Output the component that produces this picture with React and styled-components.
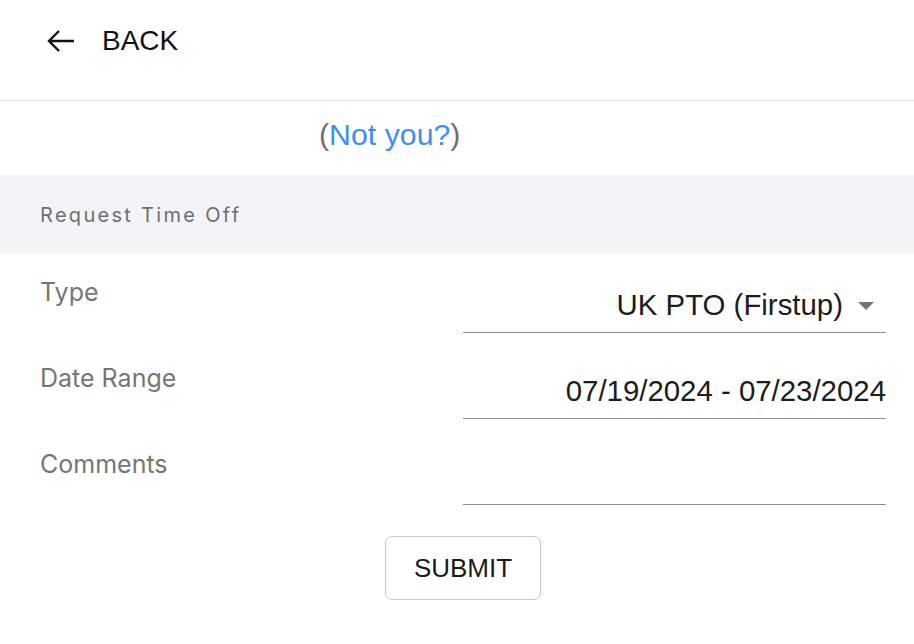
import React from "react";
import styled, { createGlobalStyle } from "styled-components";

const GlobalStyle = createGlobalStyle`
    body {
        margin: 0;
        background: #ffffff;
        font-family: "Liberation Sans", Arial, sans-serif;
    }
`;

const Page = styled.div`
    width: 914px;
    min-height: 644px;
    background: #ffffff;
`;

const Header = styled.div`
    height: 101px;
    box-sizing: border-box;
    border-bottom: 1px solid #e3e3e8;
    display: flex;
    align-items: flex-start;
    padding: 25px 0 0 47px;
`;

const BackButton = styled.button`
    display: flex;
    align-items: center;
    gap: 27px;
    padding: 0;
    border: none;
    background: transparent;
    cursor: pointer;
    font-family: "Liberation Sans", Arial, sans-serif;
    font-size: 28px;
    color: #111111;
`;

const NotYouRow = styled.div`
    height: 74px;
    box-sizing: border-box;
    display: flex;
    align-items: center;
    padding: 0 0 6px 319px;
    font-family: "Liberation Sans", Arial, sans-serif;
    font-size: 30.3px;
    color: #6f6f6f;
`;

const Link = styled.a`
    color: #3d8ff2;
    text-decoration: none;
    cursor: pointer;
`;

const SectionBand = styled.div`
    height: 79px;
    background: #f4f4f8;
    display: flex;
    align-items: center;
    padding-left: 40px;
    font-family: Inter, "Noto Sans", sans-serif;
    font-size: 20px;
    letter-spacing: 2.3px;
    color: #6e6e6e;
`;

const Row = styled.div`
    height: 86px;
    display: flex;
    justify-content: space-between;
    align-items: flex-start;
    padding: 0 28px 0 40px;
`;

const Label = styled.div`
    margin-top: 23px;
    font-family: Inter, "Noto Sans", sans-serif;
    font-size: 25px;
    color: #767676;
`;

const Field = styled.div`
    margin-top: 34px;
    width: 423px;
    height: 45px;
    box-sizing: border-box;
    border-bottom: 1px solid #8e8e8e;
    display: flex;
    justify-content: flex-end;
    align-items: flex-start;
    gap: 15px;
    font-family: "Liberation Sans", Arial, sans-serif;
    font-size: 29.4px;
    color: #1c1c1c;
`;

const DropArrow = styled.span`
    width: 0;
    height: 0;
    margin: 14px 12px 0 0;
    border-left: 8px solid transparent;
    border-right: 8px solid transparent;
    border-top: 8px solid #757575;
`;

const Actions = styled.div`
    display: flex;
    justify-content: center;
    padding: 24px 0 0 12px;
`;

const SubmitButton = styled.button`
    width: 156px;
    height: 64px;
    background: #ffffff;
    border: 1px solid #c9c9c9;
    border-radius: 7px;
    font-family: "Liberation Sans", Arial, sans-serif;
    font-size: 26px;
    color: #1a1a1a;
    cursor: pointer;
`;

function ArrowBack()
{
    return (
        <svg width="28" height="22" viewBox="0 0 28 22" fill="none">
            <path d="M12 1 L2 11 L12 21 M2 11 H27" stroke="#111" strokeWidth="2.4" strokeLinejoin="miter" />
        </svg>
    );
}

const fields = [
    { id: "type", label: "Type", value: "UK PTO (Firstup)", select: true },
    { id: "range", label: "Date Range", value: "07/19/2024 - 07/23/2024" },
    { id: "comments", label: "Comments", value: "" },
];

function App()
{
    return (
        <Page>
            <GlobalStyle />
            <Header>
                <BackButton>
                    <ArrowBack />
                    BACK
                </BackButton>
            </Header>

            <NotYouRow>
                (<Link>Not you?</Link>)
            </NotYouRow>

            <SectionBand>Request Time Off</SectionBand>

            {fields.map((f) => (
                <Row key={f.id}>
                    <Label>{f.label}</Label>
                    <Field>
                        {f.value}
                        {f.select && <DropArrow />}
                    </Field>
                </Row>
            ))}

            <Actions>
                <SubmitButton>SUBMIT</SubmitButton>
            </Actions>
        </Page>
    );
}

export default App;
